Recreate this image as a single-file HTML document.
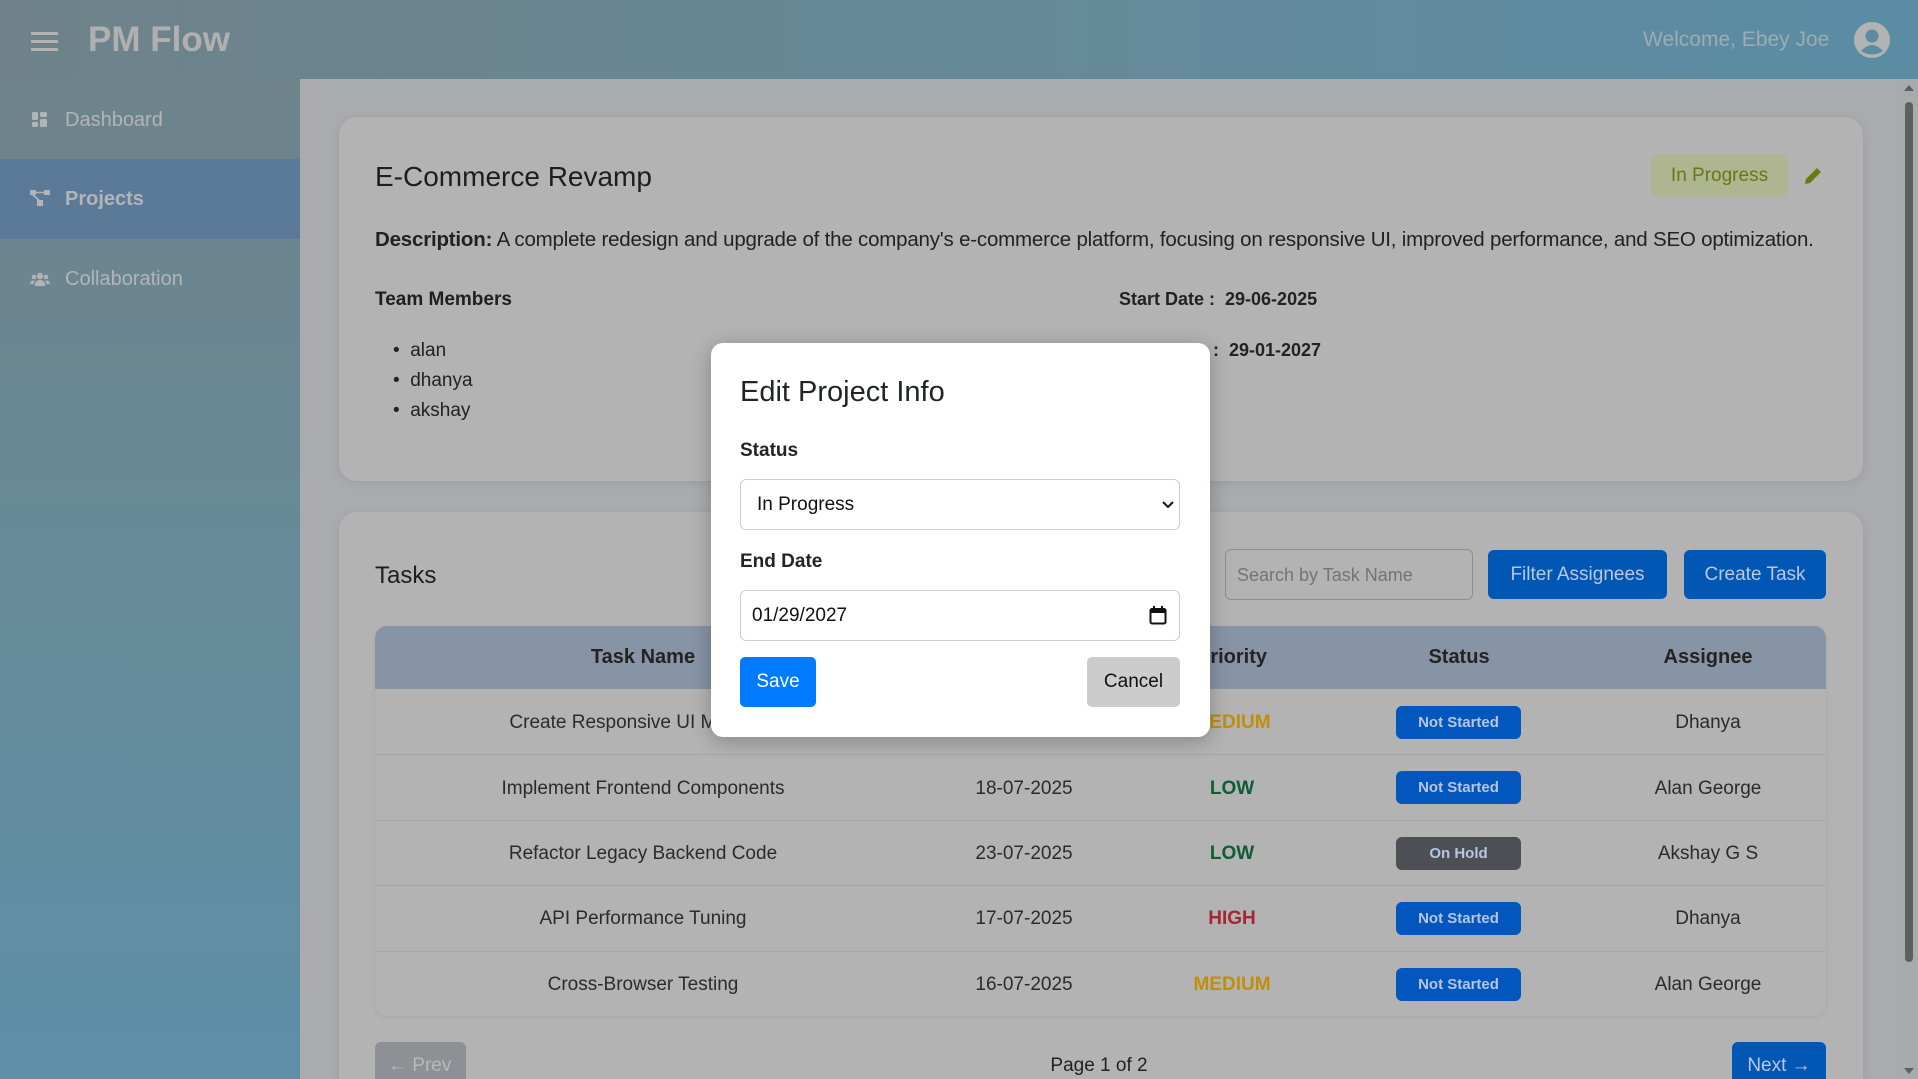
<!DOCTYPE html>
<html><head><meta charset="utf-8">
<style>
*{box-sizing:border-box;margin:0;padding:0}
html,body{width:1918px;height:1079px;overflow:hidden}
body{font-family:"Liberation Sans",sans-serif;background:#a9abaf;position:relative;color:#1f1f1f}
.abs{position:absolute;white-space:nowrap}
.header{position:absolute;left:0;top:0;width:1918px;height:79px;background:linear-gradient(90deg,#6f8289 0%,#648a9b 60%,#5a8ca4 100%)}
.side{position:absolute;left:0;top:79px;width:300px;height:1000px;background:linear-gradient(180deg,#6f838b 0%,#668a98 50%,#5d8fa7 100%)}
.nav{position:absolute;left:0;width:300px;height:80px;color:#b3b5b5;font-size:20px;display:flex;align-items:center;padding-left:65px}
.card{position:absolute;background:#b3b3b3;border-radius:18px;box-shadow:0 2px 10px rgba(0,0,0,.08)}
.btnb{position:absolute;background:#0256b4;color:#b9c8de;border-radius:6px;font-size:19px;display:flex;align-items:center;justify-content:center}
.th{position:absolute;top:626px;font-size:20px;font-weight:bold;color:#232323;transform:translateX(-50%);line-height:63px}
.td{position:absolute;font-size:19px;color:#2b2b2b;transform:translate(-50%,-50%);white-space:nowrap}
.badge{position:absolute;left:1396px;width:125px;height:33px;border-radius:6px;background:#0256be;color:#b7c6df;font-size:15px;font-weight:bold;display:flex;align-items:center;justify-content:center}
.row{position:absolute;left:375px;width:1451px;height:1px;background:#a6a6a6}
.modal{position:absolute;left:711px;top:343px;width:499px;height:394px;background:#fff;border-radius:12px;box-shadow:0 4px 20px rgba(0,0,0,.25)}
.inp{position:absolute;left:29px;width:440px;height:51px;border:1px solid #cfcfcf;border-radius:6px;font-size:19px;color:#111;display:flex;align-items:center}
</style></head><body>
<div class="header">
  <div class="abs" style="left:31px;top:32px;width:27px;height:3px;background:#b3b3b3;box-shadow:0 8px 0 #b3b3b3,0 16px 0 #b3b3b3"></div>
  <div class="abs" style="left:88px;top:20px;font-size:35px;font-weight:bold;color:#afb1b1">PM Flow</div>
  <div class="abs" style="left:1643px;top:28px;font-size:21px;color:#9dacb2">Welcome, Ebey Joe</div>
  <svg class="abs" style="left:1854px;top:22px" width="36" height="36" viewBox="0 0 36 36"><circle cx="18" cy="18" r="18" fill="#b3b3b3"/><circle cx="18" cy="14" r="6.5" fill="#5b8ca3"/><path d="M7 29 Q18 17 29 29 Q18 36 7 29Z" fill="#5b8ca3"/></svg>
</div>
<div class="side">
  <div class="nav" style="top:1px"><svg class="abs" style="left:32px;top:32px" width="15" height="15" viewBox="0 0 15 15" fill="#b3b5b5"><rect x="0" y="0" width="6" height="8" rx="1.5"/><rect x="8" y="0" width="7" height="5" rx="1.5"/><rect x="0" y="10" width="6" height="5" rx="1.5"/><rect x="8" y="7" width="7" height="8" rx="1.5"/></svg>Dashboard</div>
  <div class="nav" style="top:80px;background:#5b7a98"><svg class="abs" style="left:30px;top:31px" width="20" height="16" viewBox="0 0 20 16" fill="#b3b5b5"><rect x="0" y="0" width="6" height="5"/><rect x="14" y="0" width="6" height="5"/><rect x="7" y="10" width="6" height="6"/><path d="M3 5 L10 11 M6 2.5 H14" stroke="#b3b5b5" stroke-width="1.6"/></svg><b>Projects</b></div>
  <div class="nav" style="top:160px"><svg class="abs" style="left:30px;top:33px" width="20" height="14" viewBox="0 0 20 14" fill="#b3b5b5"><circle cx="10" cy="4" r="3.2"/><circle cx="4" cy="5" r="2.3"/><circle cx="16" cy="5" r="2.3"/><path d="M4.5 14 Q5 8 10 8 Q15 8 15.5 14Z"/><path d="M0 12 Q0 8.5 4 8.5 L5 9 Q3.5 10.5 3.5 12Z"/><path d="M20 12 Q20 8.5 16 8.5 L15 9 Q16.5 10.5 16.5 12Z"/></svg>Collaboration</div>
</div>
<div class="abs" style="left:1900px;top:79px;width:18px;height:1000px;background:#a9aaac"></div>
<div class="abs" style="left:1905px;top:102px;width:8px;height:860px;background:#5f5f5f;border-radius:4px"></div>
<div class="abs" style="left:1904px;top:85px;width:0;height:0;border-left:5px solid transparent;border-right:5px solid transparent;border-bottom:6px solid #5f5f5f"></div>
<div class="abs" style="left:1904px;top:1068px;width:0;height:0;border-left:5px solid transparent;border-right:5px solid transparent;border-top:6px solid #5f5f5f"></div>

<div class="card" style="left:339px;top:117px;width:1524px;height:364px"></div>
<div class="abs" style="left:375px;top:161px;font-size:28px;color:#1e1e1e">E-Commerce Revamp</div>
<div class="abs" style="left:1651px;top:154px;width:137px;height:43px;background:#adb690;border-radius:8px;color:#6c7612;font-size:19px;display:flex;align-items:center;justify-content:center">In Progress</div>
<svg class="abs" style="left:1804px;top:166px" width="19" height="19" viewBox="0 0 19 19"><path d="M1 18 L2 13 L13 2 L17 6 L6 17 Z" fill="#6b7a10"/></svg>
<div class="abs" style="left:375px;top:228px;font-size:20.5px;color:#222;letter-spacing:-0.2px"><b>Description:</b> A complete redesign and upgrade of the company's e-commerce platform, focusing on responsive UI, improved performance, and SEO optimization.</div>
<div class="abs" style="left:375px;top:289px;font-size:19px;font-weight:bold">Team Members</div>
<div class="abs" style="left:1119px;top:289px;font-size:18px;font-weight:bold;color:#222">Start Date :&nbsp; 29-06-2025</div>
<div class="abs" style="left:1213px;top:340px;font-size:18px;font-weight:bold;color:#222">:&nbsp; 29-01-2027</div>
<div class="abs" style="left:393px;top:336px;font-size:19px;line-height:30px;color:#222">
<div>• &nbsp;alan</div><div>• &nbsp;dhanya</div><div>• &nbsp;akshay</div></div>

<div class="card" style="left:339px;top:512px;width:1524px;height:567px;border-radius:18px 18px 0 0"></div>
<div class="abs" style="left:375px;top:562px;font-size:24px;color:#1e1e1e">Tasks</div>
<div class="abs" style="left:1225px;top:549px;width:248px;height:51px;border:1px solid #8f8f8f;border-radius:6px;font-size:18px;color:#747474;padding:15px 0 0 11px">Search by Task Name</div>
<div class="btnb" style="left:1488px;top:550px;width:179px;height:49px">Filter Assignees</div>
<div class="btnb" style="left:1684px;top:550px;width:142px;height:49px">Create Task</div>
<div class="abs" style="left:375px;top:626px;width:1451px;height:390px;border-radius:12px;background:#b3b3b3;overflow:hidden;box-shadow:0 1px 4px rgba(0,0,0,.08)"><div style="height:63px;background:#8794a5"></div></div>
<div class="th" style="left:643px">Task Name</div>
<div class="th" style="left:1024px">Due Date</div>
<div class="th" style="left:1232px">Priority</div>
<div class="th" style="left:1459px">Status</div>
<div class="th" style="left:1708px">Assignee</div>
<div class="row" style="top:754px"></div><div class="row" style="top:820px"></div><div class="row" style="top:885px"></div><div class="row" style="top:951px"></div>

<div class="td" style="left:643px;top:723px">Create Responsive UI Mockups</div>
<div class="td" style="left:643px;top:789px">Implement Frontend Components</div>
<div class="td" style="left:643px;top:854px">Refactor Legacy Backend Code</div>
<div class="td" style="left:643px;top:919px">API Performance Tuning</div>
<div class="td" style="left:643px;top:985px">Cross-Browser Testing</div>
<div class="td" style="left:1024px;top:723px">20-07-2025</div>
<div class="td" style="left:1024px;top:789px">18-07-2025</div>
<div class="td" style="left:1024px;top:854px">23-07-2025</div>
<div class="td" style="left:1024px;top:919px">17-07-2025</div>
<div class="td" style="left:1024px;top:985px">16-07-2025</div>
<div class="td" style="left:1232px;top:723px;color:#c08f0a;font-weight:bold">MEDIUM</div>
<div class="td" style="left:1232px;top:789px;color:#0f5c37;font-weight:bold">LOW</div>
<div class="td" style="left:1232px;top:854px;color:#0f5c37;font-weight:bold">LOW</div>
<div class="td" style="left:1232px;top:919px;color:#a82533;font-weight:bold">HIGH</div>
<div class="td" style="left:1232px;top:985px;color:#c08f0a;font-weight:bold">MEDIUM</div>
<div class="badge" style="top:706px">Not Started</div>
<div class="badge" style="top:771px">Not Started</div>
<div class="badge" style="top:837px;background:#4c5055">On Hold</div>
<div class="badge" style="top:902px">Not Started</div>
<div class="badge" style="top:968px">Not Started</div>
<div class="td" style="left:1708px;top:723px">Dhanya</div>
<div class="td" style="left:1708px;top:789px">Alan George</div>
<div class="td" style="left:1708px;top:854px">Akshay G S</div>
<div class="td" style="left:1708px;top:919px">Dhanya</div>
<div class="td" style="left:1708px;top:985px">Alan George</div>

<div class="abs" style="left:375px;top:1042px;width:91px;height:37px;background:#8d9095;border-radius:6px 6px 0 0;color:#b9b9b9;font-size:19px;padding:13px 0 0 13px">← Prev</div>
<div class="td" style="left:1099px;top:1066px;color:#222">Page 1 of 2</div>
<div class="btnb" style="left:1732px;top:1042px;width:94px;height:37px;border-radius:6px 6px 0 0;align-items:flex-start;padding-top:13px">Next →</div>

<div class="modal">
  <div class="abs" style="left:29px;top:33px;font-size:29px;color:#212529">Edit Project Info</div>
  <div class="abs" style="left:29px;top:97px;font-size:19px;font-weight:bold;color:#212529">Status</div>
  <div class="inp" style="top:136px;padding-left:16px">In Progress
    <svg class="abs" style="left:421px;top:21px" width="12" height="8" viewBox="0 0 12 8"><path d="M1 1 L6 6 L11 1" stroke="#111" stroke-width="2" fill="none"/></svg></div>
  <div class="abs" style="left:29px;top:208px;font-size:19px;font-weight:bold;color:#212529">End Date</div>
  <div class="inp" style="top:247px;padding-left:11px">01/29/2027
    <svg class="abs" style="left:408px;top:15px" width="18" height="19" viewBox="0 0 18 19"><rect x="1.5" y="3" width="15" height="14.5" rx="1.5" fill="none" stroke="#111" stroke-width="2"/><rect x="1.5" y="3" width="15" height="4" fill="#111"/><rect x="4" y="0" width="2" height="4" fill="#111"/><rect x="12" y="0" width="2" height="4" fill="#111"/></svg></div>
  <div class="abs" style="left:29px;top:314px;width:76px;height:50px;background:#007bff;border-radius:5px;color:#fff;font-size:19px;display:flex;align-items:center;justify-content:center">Save</div>
  <div class="abs" style="left:376px;top:314px;width:93px;height:50px;background:#cccccc;border-radius:5px;color:#111;font-size:19px;display:flex;align-items:center;justify-content:center">Cancel</div>
</div>
</body></html>
